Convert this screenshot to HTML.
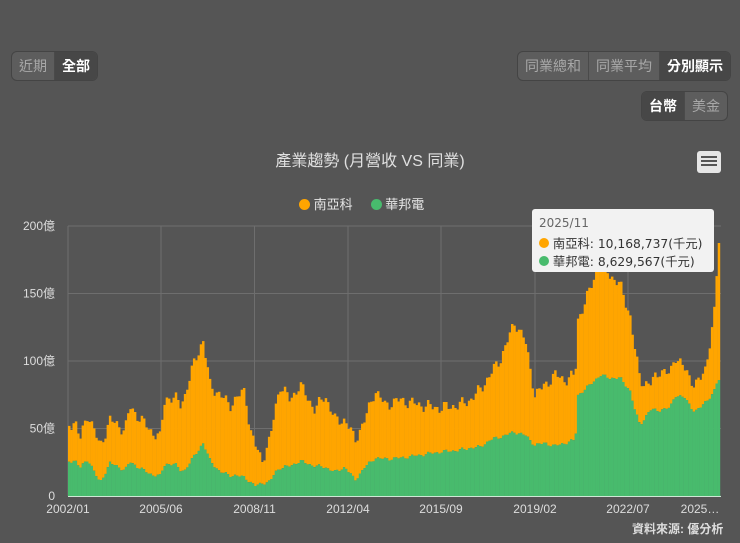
<!DOCTYPE html>
<html><head><meta charset="utf-8"><style>
body{margin:0;width:740px;height:543px;background:#555;overflow:hidden;font-family:"Liberation Sans","Noto Sans CJK TC",sans-serif;position:relative}
.grp{position:absolute;display:flex;border:1px solid #444;border-radius:6px;overflow:hidden;background:#5d5d5d}
.grp div{padding:0 7px;height:28px;line-height:28px;font-size:14px;color:#a8a8a8;border-left:1px solid #4a4a4a}
.grp div:first-child{border-left:none}
.grp .on{background:#474747;color:#fff;font-weight:bold}
.t{position:absolute;color:#e6e6e6}
</style></head><body>
<div class="grp" style="left:11px;top:51px"><div>近期</div><div class="on">全部</div></div>
<div class="grp" style="left:517px;top:51px"><div>同業總和</div><div>同業平均</div><div class="on">分別顯示</div></div>
<div class="grp" style="left:641px;top:91px"><div class="on">台幣</div><div>美金</div></div>
<div class="t" style="left:0;width:740px;text-align:center;top:147px;font-size:16px;color:#e0e0e0">產業趨勢 (月營收 VS 同業)</div>
<div style="position:absolute;left:697px;top:151px;width:24px;height:22px;background:#e6e6e6;border-radius:3px"><div style="margin:5px 4px;height:2px;background:#555;box-shadow:0 4px 0 #555,0 8px 0 #555"></div></div>
<div class="t" style="left:299px;top:194px;font-size:13px"><span style="display:inline-block;width:11px;height:11px;border-radius:50%;background:#ffa500;vertical-align:-1px"></span> 南亞科 &nbsp;&nbsp;&nbsp;&nbsp;<span style="display:inline-block;width:11px;height:11px;border-radius:50%;background:#48bb6d;vertical-align:-1px"></span> 華邦電</div>
<svg id="c" width="740" height="543" style="position:absolute;left:0;top:0"></svg>
<div style="position:absolute;left:532px;top:209px;width:182px;height:63px;background:#f2f2f2;border-radius:3px;font-size:12.3px;color:#333;font-family:'DejaVu Sans','Noto Sans CJK TC',sans-serif">
<div style="position:absolute;left:7px;top:7px;color:#666;font-size:12px">2025/11</div>
<div style="position:absolute;left:7px;top:25px"><span style="display:inline-block;width:10px;height:10px;border-radius:50%;background:#ffa500"></span> 南亞科: 10,168,737(千元)</div>
<div style="position:absolute;left:7px;top:43px"><span style="display:inline-block;width:10px;height:10px;border-radius:50%;background:#48bb6d"></span> 華邦電: 8,629,567(千元)</div>
</div>
<div class="t" style="left:632px;top:520px;font-size:12px;font-weight:bold;color:#ddd">資料來源: 優分析</div>
<script>
var s='';
var gy=[226,293.5,361,428.5,496],gl=['200億','150億','100億','50億','0'];
for(var i=0;i<5;i++){s+='<line x1="68" x2="721" y1="'+gy[i]+'" y2="'+gy[i]+'" stroke="#6e6e6e"/>';
s+='<text x="55" y="'+(gy[i]+4)+'" text-anchor="end" font-size="12" fill="#ddd" font-family="Liberation Sans,Noto Sans CJK TC,sans-serif">'+gl[i]+'</text>';}
var gx=[68,161,254.5,348,441,535,628],xl=['2002/01','2005/06','2008/11','2012/04','2015/09','2019/02','2022/07'];
for(i=0;i<gx.length;i++){s+='<line y1="226" y2="496" x1="'+gx[i]+'" x2="'+gx[i]+'" stroke="#6e6e6e"/>';
s+='<text x="'+gx[i]+'" y="513" text-anchor="middle" font-size="12" fill="#ddd" font-family="Liberation Sans,sans-serif">'+xl[i]+'</text>';}
s+='<text x="700" y="513" text-anchor="middle" font-size="12" fill="#ddd" font-family="Liberation Sans,sans-serif">2025…</text>';
var k=[[68,427,462],[75,420,460],[80,440,468],[88,413,459],[100,447,483],[110,420,463],[125,430,470],[130,407,462],[150,430,474],[160,438,476],[165,398,464],[175,398,464],[180,405,470],[185,395,470],[195,360,455],[203,340,443],[210,385,460],[220,395,472],[230,405,475],[245,390,477],[250,430,482],[255,445,486],[262,460,483],[270,440,482],[275,410,472],[280,385,468],[290,400,466],[300,385,461],[315,410,466],[325,395,467],[335,420,472],[345,420,467],[355,440,480],[365,420,467],[375,390,458],[385,405,459],[400,400,458],[420,405,455],[440,408,452],[460,405,450],[470,400,448],[480,390,447],[490,375,440],[500,360,437],[515,322,432],[525,340,435],[535,395,445],[545,385,443],[555,375,446],[565,380,443],[575.5,375,440],[577,322,396],[590,290,385],[600,260,375],[610,275,378],[620,285,378],[630,315,390],[635,350,410],[640,380,425],[650,385,410],[660,370,410],[670,375,408],[675,355,395],[685,370,398],[695,385,412],[700,380,408],[705,370,402],[712,330,395],[716,290,385],[718,243,380]];
function f(x,j){for(var i=0;i<k.length-1;i++){if(x<=k[i+1][0]){var t=(x-k[i][0])/(k[i+1][0]-k[i][0]);return k[i][j]+(k[i+1][j]-k[i][j])*t;}}return k[k.length-1][j];}
var w=652/287;
for(var m=0;m<287;m++){var x=68+m*w,c=x+w/2;var n=m>283?0:Math.sin(m*1.7)*4+Math.sin(m*0.9)*3;
var o=f(c,1)+n,g=f(c,2)+n*0.3;
s+='<rect x="'+x.toFixed(2)+'" y="'+o.toFixed(1)+'" width="'+(w+0.2).toFixed(2)+'" height="'+(g-o).toFixed(1)+'" fill="#ffa500"/>';
s+='<rect x="'+x.toFixed(2)+'" y="'+g.toFixed(1)+'" width="'+(w+0.2).toFixed(2)+'" height="'+(496-g).toFixed(1)+'" fill="#48bb6d"/>';}
s+='<line x1="68" x2="721" y1="496.5" y2="496.5" stroke="#cfe8d5"/>';
document.getElementById('c').innerHTML=s;
</script>
</body></html>
